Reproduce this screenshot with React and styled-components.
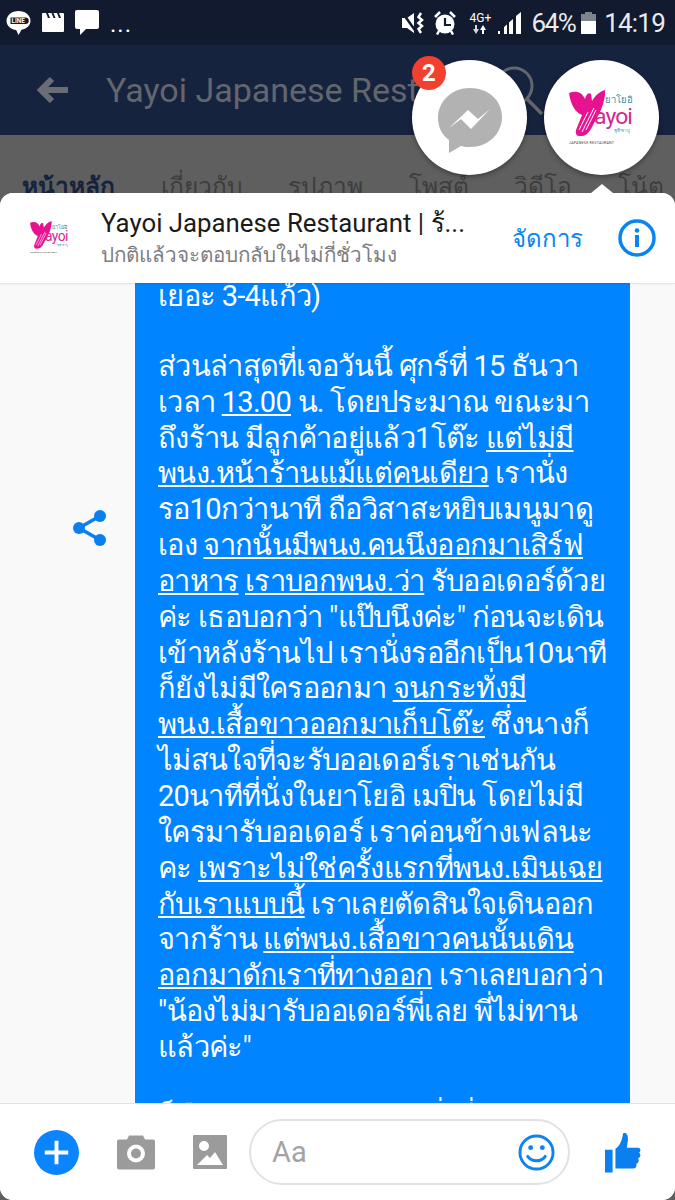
import React from 'react'
import styled, { createGlobalStyle } from 'styled-components'

const THAI = '"Roboto", "Noto Sans", "DejaVu Sans", sans-serif'

const lines = [
  [['เยอะ 3-4แก้ว)']],
  [],
  [['ส่วนล่าสุดที่เจอวันนี้ ศุกร์ที่ 15 ธันวา']],
  [['เวลา '], ['13.00', 1], [' น. โดยประมาณ ขณะมา']],
  [['ถึงร้าน มีลูกค้าอยู่แล้ว1โต๊ะ '], ['แต่ไม่มี', 1]],
  [['พนง.หน้าร้านแม้แต่คนเดียว', 1], [' เรานั่ง']],
  [['รอ10กว่านาที ถือวิสาสะหยิบเมนูมาดู']],
  [['เอง '], ['จากนั้นมีพนง.คนนึงออกมาเสิร์ฟ', 1]],
  [['อาหาร', 1], [' '], ['เราบอกพนง.ว่า', 1], [' รับออเดอร์ด้วย']],
  [['ค่ะ เธอบอกว่า "แป๊บนึงค่ะ" ก่อนจะเดิน']],
  [['เข้าหลังร้านไป เรานั่งรออีกเป็น10นาที']],
  [['ก็ยังไม่มีใครออกมา '], ['จนกระทั่งมี', 1]],
  [['พนง.เสื้อขาวออกมาเก็บโต๊ะ', 1], [' ซึ่งนางก็']],
  [['ไม่สนใจที่จะรับออเดอร์เราเช่นกัน']],
  [['20นาทีที่นั่งในยาโยอิ เมปิ่น โดยไม่มี']],
  [['ใครมารับออเดอร์ เราค่อนข้างเฟลนะ']],
  [['คะ '], ['เพราะไม่ใช่ครั้งแรกที่พนง.เมินเฉย', 1]],
  [['กับเราแบบนี้', 1], [' เราเลยตัดสินใจเดินออก']],
  [['จากร้าน '], ['แต่พนง.เสื้อขาวคนนั้นเดิน', 1]],
  [['ออกมาดักเราที่ทางออก', 1], [' เราเลยบอกว่า']],
  [['"น้องไม่มารับออเดอร์พี่เลย พี่ไม่ทาน']],
  [['แล้วค่ะ"']],
  [],
  [['ก็คือเดินออกมาเลยค่ะ ซึ่งที่ผ่านมา']],
]

const tabs = ['หน้าหลัก', 'เกี่ยวกับ', 'รูปภาพ', 'โพสต์', 'วิดีโอ', 'โน้ต']

function YayoiLogo({ size }) {
  return (
    <svg width={size} height={size * 0.86} viewBox="0 0 65 56">
      <path fill="#e6128f" d="M0 3c7-3 13-1 16 6 1-4 3-7 6-5l1 7c3-5 7-9 13-11 1 12-6 25-12 35-3 6-6 11-11 11-5 1-7-2-6-6l6-15C6 23 1 13 0 3z" />
      <path stroke="#fff" strokeWidth="1" fill="none" d="M13 42l12-24M17 40l10-20M10 40l9-18" />
      <text x="36" y="13" fontSize="9.500" fill="#3d8fb0" fontFamily={THAI}>ยาโยอิ</text>
      <text x="25" y="34" fontSize="23" fill="#cf2a90" fontFamily={THAI} textLength="39">ayoi</text>
      <text x="45" y="42" fontSize="4.500" fill="#3d8fb0" fontFamily={THAI}>ซูชิ•ชาบู</text>
      <text x="0" y="54" fontSize="3.600" fill="#444" fontFamily={THAI} textLength="45">JAPANESE RESTAURANT</text>
    </svg>
  )
}

export default function App() {
  return (
    <Page>
      <GlobalStyle />
      <StatusBar>
        <StatusGroup>
          <svg width="25" height="24" viewBox="0 0 25 24">
            <path fill="#fff" d="M12.500 0C5.900 0 .500 4.200.500 9.800c0 5 4.300 8.700 9.700 9.300l2.300 4.900 3-5.200c5-.9 9-4.300 9-9C24.500 4.200 19.100 0 12.500 0z" />
            <path fill="#111a2e" d="M4.500 6.500h15a3.200 3.200 0 0 1 0 6.500h-15z" />
            <text x="12.200" y="12.200" textAnchor="middle" fontSize="6.300" fontWeight="700" fill="#fff" fontFamily="Roboto">LINE</text>
          </svg>
          <svg width="22" height="19" viewBox="0 0 22 19">
            <path fill="#fff" d="M1 0h3l2 5h2L6 0h3.500l2 5h2l-2-5h3.500l2 5h2l-2-5H21a1 1 0 0 1 1 1v17a1 1 0 0 1-1 1H1a1 1 0 0 1-1-1V1a1 1 0 0 1 1-1z" />
          </svg>
          <svg width="24" height="25" viewBox="0 0 24 25">
            <path fill="#fff" d="M2 0h20a2 2 0 0 1 2 2v15a2 2 0 0 1-2 2H11l-6 6v-6H2a2 2 0 0 1-2-2V2a2 2 0 0 1 2-2z" />
          </svg>
          <Dots>...</Dots>
        </StatusGroup>
        <StatusGroup $gap={8}>
          <svg width="24" height="22" viewBox="0 0 24 22">
            <path fill="#fff" d="M0 6h5l7-5v20l-7-5H0z" />
            <path stroke="#111a2e" strokeWidth="2.500" d="M0 0l15 21" />
            <path stroke="#fff" strokeWidth="2.500" fill="none" d="M19 1l-2.500 4 3.500 3-3.500 3 3.500 3-3.500 3 2.500 4" />
          </svg>
          <svg width="22" height="24" viewBox="0 0 22 24">
            <circle cx="11" cy="13" r="9.500" fill="#fff" />
            <path stroke="#111a2e" strokeWidth="2.200" fill="none" d="M11 7v7h6" />
            <path stroke="#fff" strokeWidth="2.500" d="M1 6l5-5M21 6l-5-5M5 20l-2 3.500M17 20l2 3.500" />
          </svg>
          <NetworkTag>
            <span>4G+</span>
            <svg width="16" height="9" viewBox="0 0 16 9">
              <path fill="#d6d8dc" d="M3 0h2v4h2L4 9 1 4h2z" />
              <path fill="#fff" d="M12 9h-2V5H8l3-5 3 5h-2z" />
            </svg>
          </NetworkTag>
          <svg width="23" height="22" viewBox="0 0 23 22">
            <path fill="#fff" d="M0 22h2v-3H0zM6 22h3v-9.500l-3 2.500zM11 22h4V7l-4 3.500zM18 22h5V0l-5 4z" />
          </svg>
          <Percent>64%</Percent>
          <svg width="15" height="22" viewBox="0 0 15 22">
            <path fill="#7f838c" d="M4 0h7v2h4v7H0V2h4z" />
            <path fill="#fff" d="M0 9h15v13H0z" />
          </svg>
          <StatusText>14:19</StatusText>
        </StatusGroup>
      </StatusBar>

      <AppBar>
        <svg width="32" height="26" viewBox="0 0 32 26">
          <path stroke="#6a6d73" strokeWidth="6" fill="none" d="M31 13H5M15 2L4 13l11 11" />
        </svg>
        <AppTitle>Yayoi Japanese Restaurant</AppTitle>
        <svg width="50" height="50" viewBox="0 0 50 50">
          <circle cx="21" cy="21" r="18" fill="none" stroke="#63666c" strokeWidth="3" />
          <path stroke="#63666c" strokeWidth="3.500" d="M34 34l15 15" />
        </svg>
      </AppBar>

      <TabRow>
        {tabs.map((t, i) => <Tab key={t} $active={i === 0}>{t}</Tab>)}
      </TabRow>

      <Sheet>
        <SheetPointer />
        <ChatHeader>
          <HeaderLogo><YayoiLogo size={39} /></HeaderLogo>
          <ChatInfo>
            <ChatName>Yayoi Japanese Restaurant | ร้...</ChatName>
            <ChatSub>ปกติแล้วจะตอบกลับในไม่กี่ชั่วโมง</ChatSub>
          </ChatInfo>
          <Manage>จัดการ</Manage>
          <svg width="38" height="38" viewBox="0 0 38 38">
            <circle cx="19" cy="19" r="17" fill="none" stroke="#0a84f0" strokeWidth="3.500" />
            <circle cx="19" cy="11.500" r="2.300" fill="#0a84f0" />
            <path stroke="#0a84f0" strokeWidth="4" d="M19 16v12" />
          </svg>
        </ChatHeader>

        <ChatBody>
          <ShareColumn>
            <svg width="36" height="38" viewBox="0 0 36 38">
              <path stroke="#0a7ff0" strokeWidth="3.500" fill="none" d="M28 7L7 19l21 12" />
              <circle cx="28" cy="7" r="6" fill="#0a7ff0" />
              <circle cx="7" cy="19" r="6" fill="#0a7ff0" />
              <circle cx="28" cy="31" r="6" fill="#0a7ff0" />
            </svg>
          </ShareColumn>
          <Bubble>
            <MessageText>
              {lines.map((parts, i) => (
                <Line key={i} $blank={parts.length === 0}>
                  {parts.map(([text, under], j) => under ? <u key={j}>{text}</u> : <span key={j}>{text}</span>)}
                </Line>
              ))}
            </MessageText>
          </Bubble>
        </ChatBody>

        <Composer>
          <ComposerIcons>
            <svg width="45" height="45" viewBox="0 0 46 46">
              <circle cx="23" cy="23" r="23" fill="#0a84ff" />
              <path stroke="#fff" strokeWidth="4" d="M23 11v24M11 23h24" />
            </svg>
            <svg width="38" height="35" viewBox="0 0 38 34">
              <path fill="#9b9b9b" fillRule="evenodd" d="M12 0h14l2 4h8a2 2 0 0 1 2 2v26a2 2 0 0 1-2 2H2a2 2 0 0 1-2-2V6a2 2 0 0 1 2-2h8zM19 9a9 9 0 1 0 0 18 9 9 0 0 0 0-18zm0 4a5 5 0 1 1 0 10 5 5 0 0 1 0-10z" />
            </svg>
            <svg width="34" height="34" viewBox="0 0 34 34">
              <path fill="#9b9b9b" fillRule="evenodd" d="M1 0h32a1 1 0 0 1 1 1v32a1 1 0 0 1-1 1H1a1 1 0 0 1-1-1V1a1 1 0 0 1 1-1zm3 30h26l-8-13-5 6-3-3zM11 6a5 5 0 1 0 0 10 5 5 0 0 0 0-10z" />
            </svg>
          </ComposerIcons>
          <InputPill>
            <Placeholder>Aa</Placeholder>
            <svg width="37" height="37" viewBox="0 0 38 38">
              <circle cx="19" cy="19" r="17" fill="none" stroke="#0a84f0" strokeWidth="3" />
              <circle cx="13" cy="14" r="2.500" fill="#0a84f0" />
              <circle cx="25" cy="14" r="2.500" fill="#0a84f0" />
              <path stroke="#0a84f0" strokeWidth="3" strokeLinecap="round" fill="none" d="M10 23c4 6 14 6 18 0" />
            </svg>
          </InputPill>
          <svg width="36" height="41" viewBox="0 0 38 42">
            <path fill="#0a7ff0" d="M0 18h8v24H0zM11 17c5-3 7-9 8-16 4-2 6 3 5 8l-1 7h12c3 0 3 4 1 5 2 2 2 5-1 6 1 2 1 5-2 6 1 3-1 5-3 5H11z" />
          </svg>
        </Composer>
      </Sheet>

      <ChatHead $x={412}>
        <Badge>2</Badge>
        <MessengerIcon width="66" height="66" viewBox="0 0 66 66">
          <path fill="#b2b2b2" d="M33 1C15 1 1 14 1 31c0 9 4 17 11 22v13l12-7c3 1 6 1 9 1 18 0 32-13 32-30S51 1 33 1z" />
          <path fill="#fff" d="M12 41l19-18 10 9 12-10-19 20-10-10z" />
        </MessengerIcon>
      </ChatHead>
      <ChatHead $x={544}>
        <YayoiLogo size={65} />
      </ChatHead>
    </Page>
  )
}

const GlobalStyle = createGlobalStyle`
  body {
    margin: 0;
    font-family: ${THAI};
    background: #5f5f5f;
  }
`

const Page = styled.div`
  position: relative;
  width: 675px;
  height: 1200px;
  overflow: hidden;
  display: flex;
  flex-direction: column;
  background: #5f5f5f;
`

const StatusBar = styled.div`
  height: 45px;
  flex: none;
  display: flex;
  justify-content: space-between;
  align-items: center;
  padding: 0 10px 0 6px;
  background: #111a2e;
  color: #e8eaee;
`

const StatusGroup = styled.div`
  display: flex;
  align-items: center;
  gap: ${props => props.$gap || 11}px;
`

const Dots = styled.span`
  font-size: 24px;
  letter-spacing: 1px;
  color: #fff;
  margin-top: 2px;
  line-height: 24px;
`

const NetworkTag = styled.div`
  display: flex;
  flex-direction: column;
  align-items: center;
  min-width: 24px;
  color: #fff;
  font-size: 12px;
  line-height: 13px;
  margin: 0 -2px 0 4px;
`

const StatusText = styled.span`
  font-family: "Roboto", sans-serif;
  font-size: 26px;
  letter-spacing: -0.8px;
`

const Percent = styled(StatusText)`
  letter-spacing: -1.5px;
  margin: 0 -2px 0 2px;
`

const AppBar = styled.div`
  height: 90px;
  flex: none;
  display: flex;
  align-items: center;
  gap: 37px;
  padding: 0 132px 0 37px;
  background: #16233f;
  white-space: nowrap;
`

const AppTitle = styled.span`
  flex: 1;
  min-width: 0;
  overflow: hidden;
  font-size: 34px;
  color: #63666c;
`

const TabRow = styled.div`
  height: 58px;
  flex: none;
  display: flex;
  gap: 45.5px;
  padding: 34px 0 0 22px;
  box-sizing: border-box;
  overflow: hidden;
  white-space: nowrap;
`

const Tab = styled.span`
  font-size: 24.5px;
  line-height: 36px;
  font-weight: ${props => (props.$active ? 700 : 400)};
  color: ${props => (props.$active ? '#16233f' : '#3d3d3d')};
`

const Sheet = styled.div`
  position: relative;
  flex: 1;
  min-height: 0;
  display: flex;
  flex-direction: column;
  background: #fff;
  border-radius: 13px;
`

const SheetPointer = styled.div`
  position: absolute;
  top: -9px;
  left: 591px;
  width: 0;
  height: 0;
  border-left: 11px solid transparent;
  border-right: 11px solid transparent;
  border-bottom: 9px solid #fff;
`

const ChatHeader = styled.div`
  position: relative;
  z-index: 1;
  height: 90px;
  flex: none;
  display: flex;
  align-items: center;
  padding: 0 19px 0 30px;
  background: #fff;
  border-radius: 13px 13px 0 0;
  box-shadow: 0 1px 2px rgba(0, 0, 0, 0.1);
`

const HeaderLogo = styled.div`
  width: 71px;
  flex: none;
  display: flex;
`

const ChatInfo = styled.div`
  flex: 1;
  min-width: 0;
`

const ChatName = styled.div`
  font-size: 25.8px;
  line-height: 33px;
  color: #1b1b1b;
  white-space: nowrap;
`

const ChatSub = styled.div`
  font-size: 20.6px;
  line-height: 30px;
  color: #7d7d7d;
  white-space: nowrap;
`

const Manage = styled.span`
  font-size: 24px;
  color: #0a84f0;
  margin-right: 35px;
`

const ChatBody = styled.div`
  flex: 1;
  min-height: 0;
  display: flex;
  overflow: hidden;
  background: #f9f9f9;
  border-bottom: 1px solid #e2e2e2;
`

const ShareColumn = styled.div`
  width: 135px;
  flex: none;
  display: flex;
  justify-content: center;
  padding: 226px 0 0 44px;
  box-sizing: border-box;
  height: 280px;
`

const Bubble = styled.div`
  width: 495px;
  flex: none;
  box-sizing: border-box;
  padding: 0 0 0 23px;
  background: #0084ff;
  color: #fff;
  font-size: 29px;
  letter-spacing: -0.7px;
  line-height: 35.85px;
`

const MessageText = styled.div`
  margin-top: -4px;
`

const Line = styled.div`
  height: ${props => (props.$blank ? 34 : 35.85)}px;
  white-space: nowrap;
`

const Composer = styled.div`
  height: 96px;
  flex: none;
  display: flex;
  align-items: center;
  gap: 22px;
  padding: 0 34px;
  background: #fff;
  border-radius: 0 0 13px 13px;
`

const ComposerIcons = styled.div`
  display: flex;
  align-items: center;
  gap: 38px;
`

const InputPill = styled.div`
  width: 321px;
  height: 66px;
  flex: none;
  margin-right: 13px;
  box-sizing: border-box;
  display: flex;
  align-items: center;
  justify-content: space-between;
  padding: 0 13px 0 21px;
  background: #fff;
  border: 2px solid #e2e2e2;
  border-radius: 33px;
`

const Placeholder = styled.span`
  font-size: 29px;
  color: #a3a3a3;
`

const ChatHead = styled.div`
  position: absolute;
  top: 60px;
  left: ${props => props.$x}px;
  width: 115px;
  height: 115px;
  display: flex;
  align-items: center;
  justify-content: center;
  background: #fff;
  border-radius: 50%;
  box-shadow: 0 2px 5px rgba(0, 0, 0, 0.35);
`

const MessengerIcon = styled.svg`
  margin-top: 5px;
`

const Badge = styled.div`
  position: absolute;
  top: -4px;
  left: 0;
  width: 34px;
  height: 34px;
  display: flex;
  align-items: center;
  justify-content: center;
  background: #f2402f;
  color: #fff;
  font-size: 24px;
  font-weight: 700;
  border-radius: 50%;
`
